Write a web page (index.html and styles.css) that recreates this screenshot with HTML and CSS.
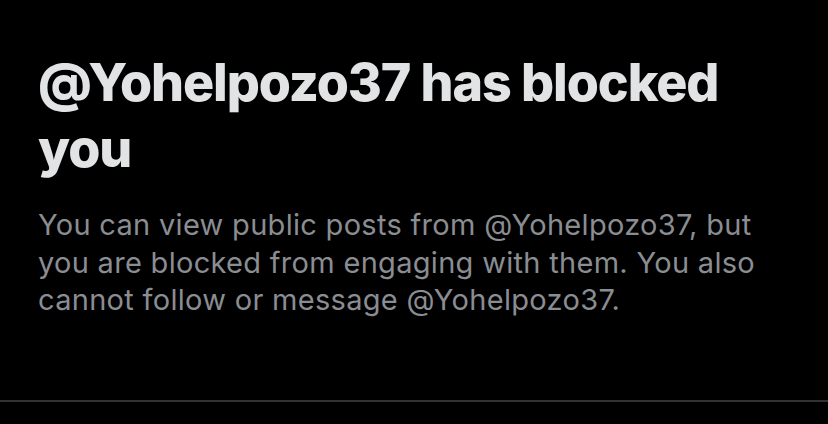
FILE: index.html
```html
<!DOCTYPE html>
<html>
<head>
<meta charset="utf-8">
<link rel="stylesheet" href="styles.css">
</head>
<body>
<main class="blocked">
  <div class="content">
    <h1 class="title">@Yohelpozo37 has blocked you</h1>
    <p class="desc">You can view public posts from @Yohelpozo37, but you are blocked from engaging with them. You also cannot follow or message @Yohelpozo37.</p>
  </div>
  <div class="divider"></div>
</main>
</body>
</html>
```
FILE: styles.css
```css
html, body {
  margin: 0;
  padding: 0;
  background: #000;
}
.blocked {
  width: 828px;
  height: 424px;
  background: #000;
  display: flex;
  flex-direction: column;
}
.content {
  padding: 50px 40px 0 38px;
  height: 400px;
  box-sizing: border-box;
}
.title {
  margin: 0;
  max-width: 720px;
  font-family: Inter, "Liberation Sans", sans-serif;
  font-weight: 800;
  font-size: 52px;
  line-height: 66px;
  letter-spacing: -1.1px;
  color: #e2e3e4;
}
.desc {
  margin: 24px 0 0;
  font-family: Inter, "Liberation Sans", sans-serif;
  font-weight: 400;
  font-size: 29px;
  line-height: 37.5px;
  letter-spacing: 0.3px;
  color: #8a8d91;
}
.divider {
  height: 2px;
  background: #2f3336;
}
```
